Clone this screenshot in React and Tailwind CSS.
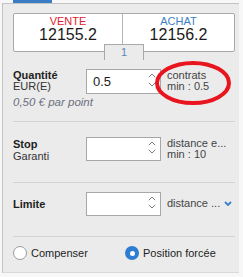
import React from "react";

const Spinner = () => (
  <div className="absolute right-[4px] top-[3px] bottom-[6px] flex flex-col justify-between">
    <svg width="8" height="5" viewBox="0 0 8 5">
      <path d="M0.8 4.2 L4 1 L7.2 4.2" fill="none" stroke="#7d7d7d" strokeWidth="1" />
    </svg>
    <svg width="8" height="5" viewBox="0 0 8 5">
      <path d="M0.8 0.8 L4 4 L7.2 0.8" fill="none" stroke="#7d7d7d" strokeWidth="1" />
    </svg>
  </div>
);

const NumberInput = ({ value, height = "h-[24px]" }) => (
  <div
    className={`relative w-[75px] ${height} shrink-0 border border-[#a7a7a7] bg-white flex items-center pl-[6px] text-[13px] text-[#1b1b1b]`}
  >
    {value}
    <Spinner />
  </div>
);

const Separator = ({ className }) => (
  <div className={`h-px w-[222px] bg-[#d2d2d2] ${className}`} />
);

export default function App() {
  return (
    <div className="relative w-[243px] h-[277px] overflow-hidden bg-[#f7f7f7] font-['Liberation_Sans',Arial,sans-serif]">
      {/* top tab strip */}
      <div className="h-[3px]">
        <div className="ml-[13px] w-[39px] h-[3px] bg-[#3b7dc5]" />
      </div>

      {/* order panel */}
      <div className="ml-[2px] w-[237px] h-[270px] border-l border-t border-b border-l-[#c3c3c3] border-t-[#c3c3c3] border-b-[#d9d9d9] bg-[#ebebeb] pl-[10px] pt-[9px]">
        {/* PRICES */}
        <div className="relative flex w-[222px] h-[39px] border border-[#a9a9a9] rounded-[2px] bg-white">
          <div className="w-[109px] border-r border-[#b5b5b5] flex flex-col items-center pt-[1px]">
            <span className="text-[11px] leading-[12px] text-[#e0212e]">VENTE</span>
            <span className="text-[16px] leading-[16px] text-[#1a1a1a]">12155.2</span>
          </div>
          <div className="flex-1 flex flex-col items-center pt-[1px]">
            <span className="text-[11px] leading-[12px] text-[#3d7fc6]">ACHAT</span>
            <span className="text-[16px] leading-[16px] text-[#1a1a1a]">12156.2</span>
          </div>
          <div className="absolute left-[90px] top-[30px] w-[40px] h-[16px] border border-b-0 border-[#a9a9a9] bg-[#ebebeb] flex justify-center pt-[1px]">
            <span className="text-[11px] leading-[12px] text-[#5f86b6]">1</span>
          </div>
        </div>

        {/* QUANTITE */}
        <div className="flex items-start mt-[17px]">
          <div className="w-[73px] shrink-0 pt-[1px] text-[11px] leading-[11px] text-[#1e1e1e]">
            <div className="font-bold">Quantité</div>
            <div className="text-[#333]">EUR(E)</div>
            <div className="mt-[4px] leading-[12px] italic text-[#6b7080] whitespace-nowrap text-[11.5px]">
              0,50 € par point
            </div>
          </div>
          <NumberInput value="0.5" height="h-[25px]" />
          <div className="ml-[6px] pt-[1px] text-[11px] leading-[11px] text-[#444]">
            <div>contrats</div>
            <div>min : 0.5</div>
          </div>
        </div>

        <Separator className="mt-[13px]" />

        {/* STOP */}
        <div className="flex items-start mt-[15px]">
          <div className="w-[73px] shrink-0 pt-[1px] text-[11px] leading-[12px] text-[#1e1e1e]">
            <div className="font-bold">Stop</div>
            <div className="text-[#333]">Garanti</div>
          </div>
          <NumberInput value="" />
          <div className="ml-[6px] pt-[1px] text-[11px] leading-[11px] text-[#444] whitespace-nowrap">
            <div>distance e...</div>
            <div>min : 10</div>
          </div>
        </div>

        <Separator className="mt-[20px]" />

        {/* LIMITE */}
        <div className="flex items-center mt-[9px]">
          <div className="w-[73px] shrink-0 text-[11px] leading-[12px] font-bold text-[#1e1e1e]">
            Limite
          </div>
          <NumberInput value="" />
          <div className="ml-[6px] flex items-center text-[11px] leading-[11px] text-[#444] whitespace-nowrap -mt-[2px]">
            <span>distance ...</span>
            <svg className="ml-[4px]" width="8" height="5" viewBox="0 0 8 5">
              <path d="M1 1 L4 4 L7 1" fill="none" stroke="#3a7fc8" strokeWidth="1.8" />
            </svg>
          </div>
        </div>

        <Separator className="mt-[20px]" />

        {/* MODE */}
        <div className="flex items-center mt-[9px] text-[11px] leading-[14px] text-[#1e1e1e]">
          <label className="w-[112px] flex items-center">
            <span className="w-[14px] h-[14px] rounded-full border border-[#9a9a9a] bg-white" />
            <span className="ml-[4px]">Compenser</span>
          </label>
          <label className="flex items-center">
            <span className="w-[14px] h-[14px] rounded-full bg-[#2f7dd1] flex items-center justify-center">
              <span className="w-[5px] h-[5px] rounded-full bg-white" />
            </span>
            <span className="ml-[4px]">Position forcée</span>
          </label>
        </div>
      </div>

      {/* red annotation */}
      <svg className="absolute left-0 top-0 pointer-events-none" width="243" height="277">
        <ellipse cx="193" cy="83" rx="36" ry="20" fill="none" stroke="#e8141e" strokeWidth="4" />
      </svg>
    </div>
  );
}
